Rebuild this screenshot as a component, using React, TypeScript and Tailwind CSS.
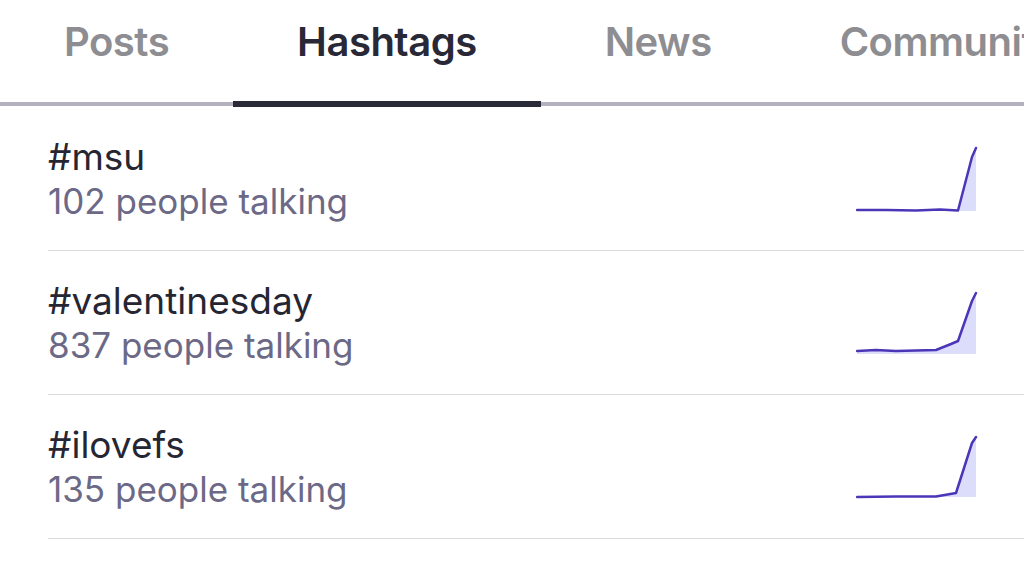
import React from "react";

const tabs = ["Posts", "Hashtags", "News", "Communities"];

type Tag = {
  name: string;
  count: number;
  points: [number, number][];
  base: number;
};

const tags: Tag[] = [
  {
    name: "#msu",
    count: 102,
    base: 66,
    points: [
      [1, 65],
      [30, 65],
      [60, 65.5],
      [84, 64.5],
      [102, 65.5],
      [116, 12],
      [120, 3],
    ],
  },
  {
    name: "#valentinesday",
    count: 837,
    base: 65,
    points: [
      [1, 62],
      [20, 61],
      [40, 62],
      [80, 61],
      [95, 55],
      [102, 52],
      [116, 12],
      [120, 4],
    ],
  },
  {
    name: "#ilovefs",
    count: 135,
    base: 64,
    points: [
      [1, 64],
      [40, 63.5],
      [80, 63.5],
      [100, 60],
      [116, 10],
      [120, 4],
    ],
  },
  {
    name: "#Tbt",
    count: 64,
    base: 64,
    points: [
      [1, 64],
      [80, 63],
      [116, 10],
      [120, 4],
    ],
  },
];

function Spark({ points, base }: { points: [number, number][]; base: number }) {
  const line = points.map((p) => p.join(",")).join(" ");
  const area = `1,${base} ${line} 120,${base}`;
  return (
    <svg width="122" height="70" viewBox="0 0 122 70" className="shrink-0">
      <polygon points={area} fill="#dcdcfb" />
      <polyline
        points={line}
        fill="none"
        stroke="#4b36b8"
        strokeWidth="2.5"
        strokeLinejoin="round"
        strokeLinecap="round"
      />
    </svg>
  );
}

export default function App() {
  return (
    <div
      className="h-[575px] w-[1024px] overflow-hidden bg-white"
      style={{ fontFamily: "Inter, 'Noto Sans', sans-serif" }}
    >
      <div className="relative flex h-[107px]">
        <div className="absolute bottom-[1px] left-0 right-0 h-[4px] bg-[#b2b1be]" />
        {tabs.map((t, i) => (
          <div
            key={t}
            className={`relative shrink-0 px-[64px] pt-[18px] text-[40px] font-semibold leading-[48px] tracking-[-0.5px] whitespace-nowrap ${
              i === 1 ? "text-[#282836]" : "text-[#8d8d92]"
            }`}
          >
            {t}
            {i === 1 && (
              <div className="absolute bottom-0 left-0 right-0 h-[6px] bg-[#2a2938]" />
            )}
          </div>
        ))}
      </div>
      <div>
        {tags.map((tag) => (
          <div key={tag.name} className="ml-[48px] flex h-[144px] items-start border-b border-[#dcdcdc] pr-[46px]">
            <div className="flex-1 pt-[28px]">
              <div className="text-[37px] leading-[44px] text-[#262633]">{tag.name}</div>
              <div className="text-[35px] leading-[44px] text-[#6c6987]">
                {tag.count} people talking
              </div>
            </div>
            <div className="pt-[38px]">
              <Spark points={tag.points} base={tag.base} />
            </div>
          </div>
        ))}
      </div>
    </div>
  );
}
